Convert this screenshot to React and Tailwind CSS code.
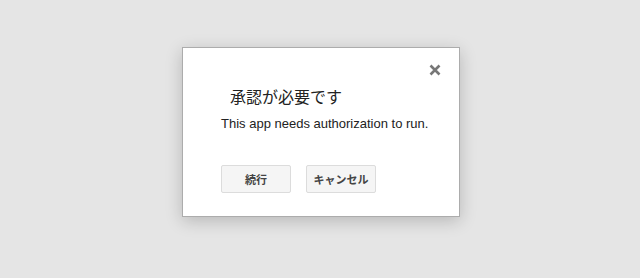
export default function App() {
  return (
    <div className="w-[640px] h-[278px] bg-[#e5e5e5] flex justify-center pl-[2px] pt-[47px] font-['Liberation_Sans','Noto_Sans_CJK_JP',sans-serif]">
      <div className="relative w-[278px] h-[170px] bg-white border border-[#acacac] shadow-[0_4px_16px_rgba(0,0,0,0.2)] pl-[38px] pt-[38px]">
        <button className="absolute right-[17px] top-[15px] w-[14px] h-[14px] flex items-center justify-center">
          <svg width="12" height="12" viewBox="0 0 12 12">
            <path d="M1.5 1.5 L10.5 10.5 M10.5 1.5 L1.5 10.5" stroke="#777" strokeWidth="2.6" strokeLinecap="butt" />
          </svg>
        </button>
        <div className="ml-[9px] text-[16px] leading-[20px] text-[#222] font-['Noto_Sans_CJK_JP',sans-serif]">承認が必要です</div>
        <div className="mt-[10px] text-[13px] leading-[16px] text-[#222]">This app needs authorization to run.</div>
        <div className="mt-[33px] flex gap-[15px]">
          <button className="w-[70px] h-[28px] bg-[#f5f5f5] border border-[#dcdcdc] rounded-[2px] text-[11px] font-bold text-[#444] font-['Noto_Sans_CJK_JP',sans-serif]">続行</button>
          <button className="w-[70px] h-[28px] bg-[#f5f5f5] border border-[#dcdcdc] rounded-[2px] text-[11px] font-bold text-[#444] font-['Noto_Sans_CJK_JP',sans-serif]">キャンセル</button>
        </div>
      </div>
    </div>
  );
}
